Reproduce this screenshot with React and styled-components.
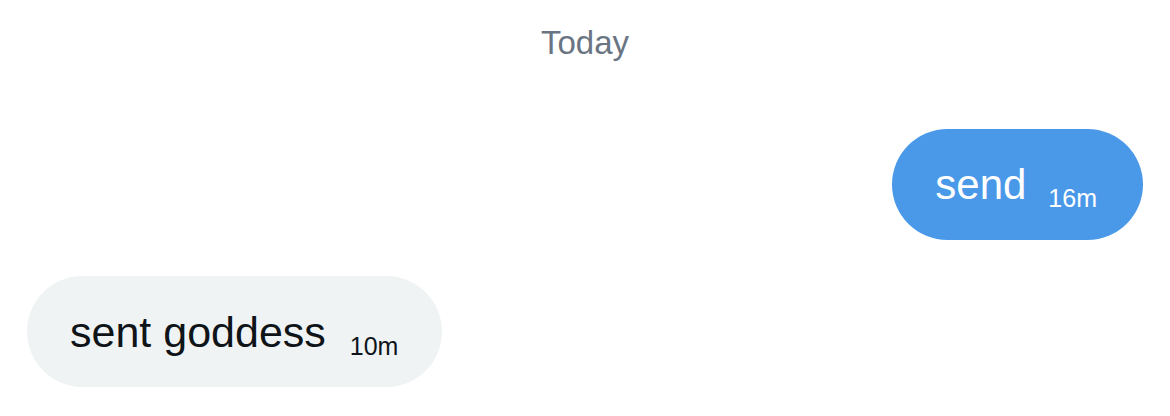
import React from 'react';
import styled, { createGlobalStyle } from 'styled-components';

const GlobalStyle = createGlobalStyle`
  body {
    margin: 0;
    background: #fff;
    font-family: "Liberation Sans", Arial, sans-serif;
  }
`;

function App() {
  return (
    <>
      <GlobalStyle />
      <Thread>
        <DayLabel>Today</DayLabel>
        <Row $mine>
          <Bubble $mine>
            send<Time>16m</Time>
          </Bubble>
        </Row>
        <Row>
          <Bubble>
            sent goddess<Time $gap={24}>10m</Time>
          </Bubble>
        </Row>
      </Thread>
    </>
  );
}

export default App;

// CHAT THREAD

const Thread = styled.div`
  display: flex;
  flex-direction: column;
  padding: 24px 27px 0;
  width: 1170px;
  height: 416px;
  box-sizing: border-box;
`;

const DayLabel = styled.div`
  text-align: center;
  font-size: 33px;
  line-height: 38px;
  color: #6a7583;
  margin-bottom: 67px;
`;

const Row = styled.div`
  display: flex;
  justify-content: ${p => (p.$mine ? 'flex-end' : 'flex-start')};
  margin-bottom: 36px;
`;

const Bubble = styled.div`
  background: ${p => (p.$mine ? '#4a99e9' : '#eff3f4')};
  color: ${p => (p.$mine ? '#fff' : '#0f1419')};
  border-radius: 56px;
  padding: ${p => (p.$mine ? '31px 46px 30px 43px' : '31px 44px 30px 43px')};
  font-size: ${p => (p.$mine ? 42 : 43)}px;
  line-height: 50px;
  height: 111px;
  box-sizing: border-box;
  white-space: nowrap;
`;

const Time = styled.span`
  font-size: 25px;
  line-height: 1;
  margin-left: ${p => p.$gap || 22}px;
  vertical-align: -8px;
`;
